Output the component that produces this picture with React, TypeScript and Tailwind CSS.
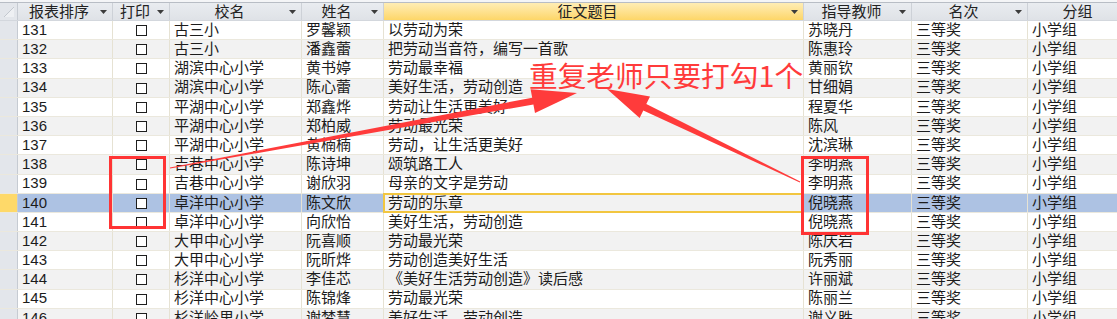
import React from "react";

type Row = [string, string, string, string, string];

const rows: Row[] = [
  ["131", "古三小", "罗馨颖", "以劳动为荣", "苏晓丹"],
  ["132", "古三小", "潘鑫蕾", "把劳动当音符，编写一首歌", "陈惠玲"],
  ["133", "湖滨中心小学", "黄书婷", "劳动最幸福", "黄丽钦"],
  ["134", "湖滨中心小学", "陈心蕾", "美好生活，劳动创造", "甘细娟"],
  ["135", "平湖中心小学", "郑鑫烨", "劳动让生活更美好", "程夏华"],
  ["136", "平湖中心小学", "郑柏威", "劳动最光荣", "陈风"],
  ["137", "平湖中心小学", "黄楠楠", "劳动，让生活更美好", "沈滨琳"],
  ["138", "吉巷中心小学", "陈诗坤", "颂筑路工人", "李明燕"],
  ["139", "吉巷中心小学", "谢欣羽", "母亲的文字是劳动", "李明燕"],
  ["140", "卓洋中心小学", "陈文欣", "劳动的乐章", "倪晓燕"],
  ["141", "卓洋中心小学", "向欣怡", "美好生活，劳动创造", "倪晓燕"],
  ["142", "大甲中心小学", "阮喜顺", "劳动最光荣", "陈庆岩"],
  ["143", "大甲中心小学", "阮昕烨", "劳动创造美好生活", "阮秀丽"],
  ["144", "杉洋中心小学", "李佳芯", "《美好生活劳动创造》读后感", "许丽斌"],
  ["145", "杉洋中心小学", "陈锦烽", "劳动最光荣", "陈丽兰"],
  ["146", "杉洋岭里小学", "谢梦慧", "美好生活，劳动创造", "谢义胜"],
];

const headers = [
  { w: "w-[95px]", t: "报表排序", arrow: true },
  { w: "w-[57px]", t: "打印", arrow: true },
  { w: "w-[132px]", t: "校名", arrow: true },
  { w: "w-[82px]", t: "姓名", arrow: true },
  { w: "w-[420px]", t: "征文题目", arrow: true, hot: true },
  { w: "w-[108px]", t: "指导教师", arrow: true },
  { w: "w-[116px]", t: "名次", arrow: true },
  { w: "w-[100px]", t: "分组", arrow: false },
];

const Arrow = () => (
  <svg width="7" height="4" viewBox="0 0 7 4" className="mr-[5px] shrink-0">
    <polygon points="0,0 7,0 3.5,4" fill="#3c3c3c" />
  </svg>
);

const cellBase =
  "shrink-0 h-full border-r border-[#e6e2d3] flex items-center pl-[4px] whitespace-nowrap overflow-hidden";

export default function App() {
  return (
    <div className="relative w-[1117px] h-[319px] overflow-hidden bg-white font-['Liberation_Sans','Noto_Sans_CJK_SC',sans-serif] text-[15px] text-[#1c1c1c]">
      {/* header */}
      <div className="h-[2px] bg-[#f4f5f7]" />
      <div className="flex h-[19px] border-t border-[#b8bdc5] border-b border-b-[#d3d7dd]">
        <div className="shrink-0 w-[18px] h-full bg-[#e3e6eb] border-r border-[#c6cbd2] flex items-center justify-center">
          <svg width="12" height="12" viewBox="0 0 12 12">
            <polygon points="1,11 11,1 11,11" fill="#eef0f3" />
            <line x1="1" y1="11" x2="11" y2="1" stroke="#c3c8cf" strokeWidth="1" />
          </svg>
        </div>
        {headers.map((h) => (
          <div
            key={h.t}
            className={`${h.w} shrink-0 h-full flex items-center border-r border-[#cdd1d7] ${
              h.hot
                ? "bg-gradient-to-b from-[#ffedb4] to-[#fdd667]"
                : "bg-gradient-to-b from-[#e9ecf0] to-[#dfe2e7]"
            }`}
          >
            <span className="flex-1 text-center leading-none text-[#222]">{h.t}</span>
            {h.arrow && <Arrow />}
          </div>
        ))}
      </div>

      {/* rows */}
      {rows.map((r, i) => {
        const selected = r[0] === "140";
        const grey = i % 2 === 1;
        const rowBg = selected ? "bg-[#adc2e3]" : grey ? "bg-[#f2f2f2]" : "bg-white";
        return (
          <div key={r[0]} className="flex h-[19.2px] border-b border-[#ebe8dd]">
            <div
              className={`shrink-0 w-[18px] h-full border-r border-[#c6cbd2] ${
                selected ? "bg-[#fed969]" : "bg-[#e3e6eb]"
              }`}
            />
            <div className={`${cellBase} w-[95px] ${rowBg}`}>{r[0]}</div>
            <div className={`shrink-0 h-full w-[57px] border-r border-[#e6e2d3] flex justify-center ${rowBg}`}>
              <div className="mt-[4px] w-[11px] h-[11px] border border-[#1e1e1e] bg-white" />
            </div>
            <div className={`${cellBase} w-[132px] ${rowBg}`}>{r[1]}</div>
            <div className={`${cellBase} w-[82px] ${rowBg}`}>{r[2]}</div>
            <div
              className={`${cellBase} w-[420px] relative overflow-visible ${
                selected ? "bg-[#f2f2f2]" : rowBg
              }`}
            >
              {r[3]}
              {selected && (
                <div className="absolute -left-[1px] -top-[1px] -right-[1px] -bottom-[1px] border-2 border-[#f2c640]" />
              )}
            </div>
            <div className={`${cellBase} w-[108px] ${rowBg}`}>{r[4]}</div>
            <div className={`${cellBase} w-[116px] ${rowBg}`}>三等奖</div>
            <div className={`${cellBase} w-[100px] ${rowBg}`}>小学组</div>
          </div>
        );
      })}

      {/* annotations */}
      <div className="absolute left-[109px] top-[156px] w-[57px] h-[73px] border-[3px] border-[#ff3434]" />
      <div className="absolute left-[801px] top-[156px] w-[68px] h-[79px] border-[3px] border-[#ff3434]" />

      <svg
        className="absolute left-0 top-0 pointer-events-none"
        width="1117"
        height="319"
        viewBox="0 0 1117 319"
      >
        <polygon
          points="170.1,168.5 533.4,104.5 535,112.9 577,93 530.6,89.3 532.2,97.7 169.9,167.5"
          fill="#ff3b3b"
        />
        <polygon
          points="800.2,181.5 646.3,104.1 650,96.4 607,89 639.6,118 643.3,110.4 799.8,182.5"
          fill="#ff3b3b"
        />
      </svg>

      <div className="absolute left-[529px] top-[61px] leading-none text-[28.7px] text-[#ff3b3b] font-['Noto_Sans_CJK_SC',sans-serif] whitespace-nowrap">
        重复老师只要打勾1个
      </div>
    </div>
  );
}
